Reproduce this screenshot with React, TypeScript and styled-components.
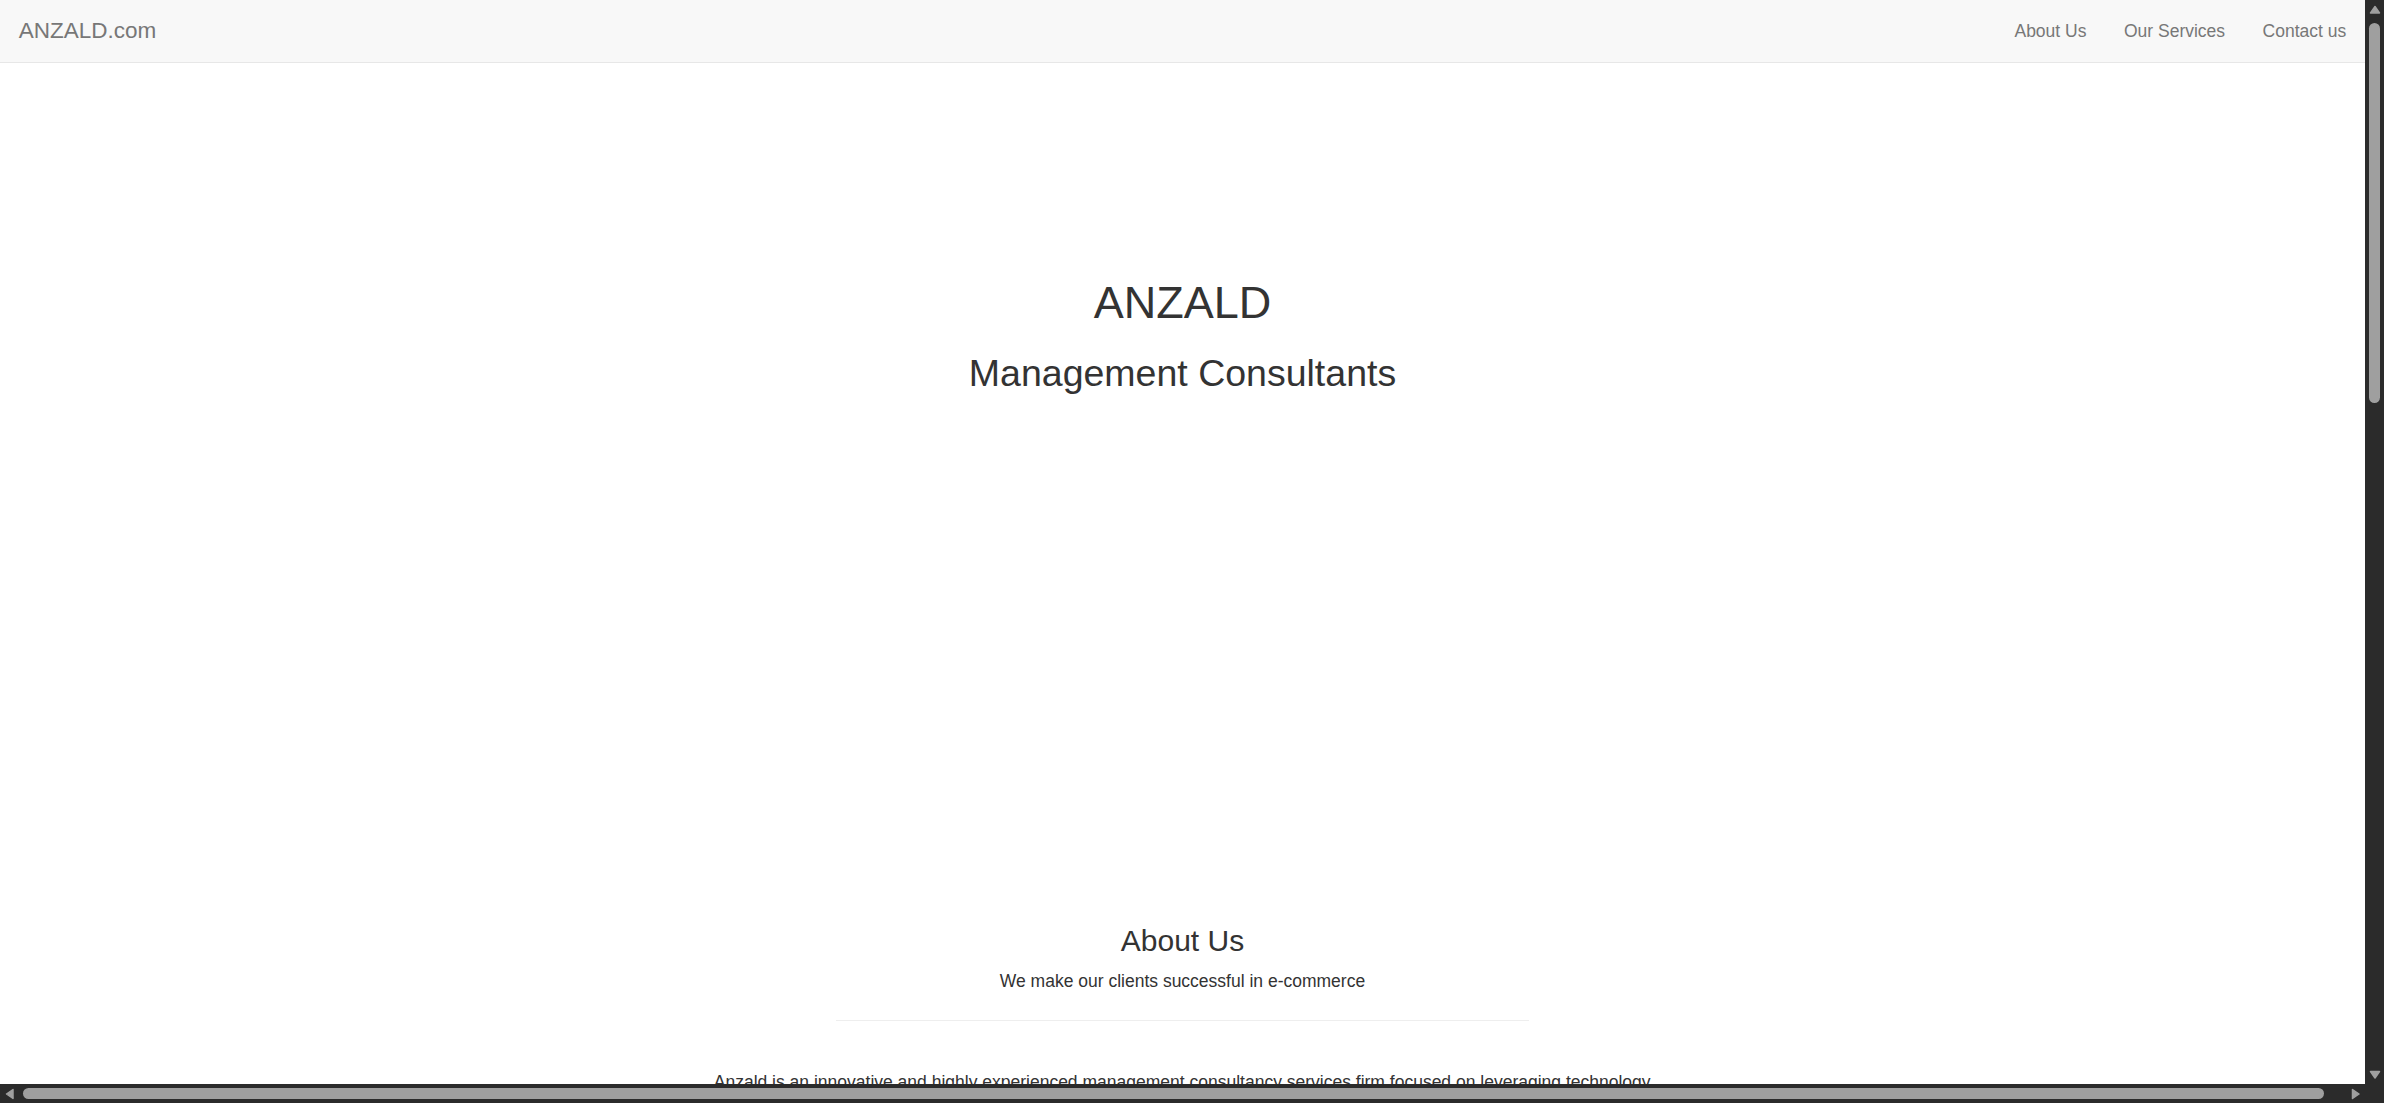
import React from "react";
import styled, { createGlobalStyle } from "styled-components";

const GlobalStyle = createGlobalStyle`
  html, body {
    margin: 0;
    padding: 0;
    height: 100%;
    overflow: hidden;
  }
  body {
    font-family: "Liberation Sans", Arial, Helvetica, sans-serif;
    color: #333;
    background: #fff;
  }
  #root {
    height: 100%;
  }
  * {
    box-sizing: border-box;
  }
`;

const TRACK = "#2b2b2b";
const THUMB = "#9f9f9f";
const BAR = 19;

/* ---------- window frame with scrollbars ---------- */

const Frame = styled.div`
  display: grid;
  grid-template-columns: 1fr ${BAR}px;
  grid-template-rows: 1fr ${BAR}px;
  width: 100vw;
  height: 100vh;
  background: ${TRACK};
`;

const Content = styled.main`
  overflow: hidden;
  background: #fff;
  min-width: 0;
  min-height: 0;
`;

const ScrollBar = styled.div<{ $dir: "v" | "h" }>`
  display: flex;
  flex-direction: ${(p) => (p.$dir === "v" ? "column" : "row")};
  background: ${TRACK};
`;

const ScrollButton = styled.div`
  flex: 0 0 ${BAR}px;
  width: ${BAR}px;
  height: ${BAR}px;
  display: flex;
  align-items: center;
  justify-content: center;
`;

const Track = styled.div<{ $dir: "v" | "h" }>`
  flex: 1;
  display: flex;
  flex-direction: ${(p) => (p.$dir === "v" ? "column" : "row")};
  padding: 4px;
`;

const Thumb = styled.div<{ $dir: "v" | "h"; $length: number }>`
  flex: 0 0 ${(p) => p.$length}px;
  background: ${THUMB};
  border-radius: 6px;
  ${(p) => (p.$dir === "v" ? "width: 11px;" : "height: 11px;")}
`;

const Corner = styled.div`
  background: ${TRACK};
`;

const Arrow = ({ dir }: { dir: "up" | "down" | "left" | "right" }) => {
  const pts = {
    up: "6,1.5 10.5,8 1.5,8",
    down: "1.5,1.5 10.5,1.5 6,8",
    left: "8,1.5 8,10.5 1.5,6",
    right: "1.5,1.5 8,6 1.5,10.5",
  }[dir];
  const vertical = dir === "up" || dir === "down";
  const w = vertical ? 12 : 9.5;
  const h = vertical ? 9.5 : 12;
  return (
    <svg width={w} height={h} viewBox={`0 0 ${w} ${h}`}>
      <polygon points={pts} fill={THUMB} stroke={THUMB} strokeWidth={1.5} strokeLinejoin="round" />
    </svg>
  );
};

/* ---------- page ---------- */

const Page = styled.div`
  min-height: 2922px;
`;

const Navbar = styled.nav`
  display: flex;
  justify-content: space-between;
  align-items: stretch;
  height: 63px;
  background: #f8f8f8;
  border-bottom: 1px solid #e7e7e7;
`;

const Brand = styled.a`
  display: block;
  padding: 0 18.75px;
  font-size: 22.5px;
  line-height: 62px;
  color: #777;
  text-decoration: none;
`;

const NavList = styled.ul`
  display: flex;
  margin: 0;
  padding: 0;
  list-style: none;
`;

const NavItem = styled.li`
  display: block;
`;

const NavLink = styled.a`
  display: block;
  padding: 0 18.75px;
  font-size: 17.5px;
  line-height: 62px;
  color: #777;
  text-decoration: none;
`;

const Hero = styled.header`
  padding: 215px 0 480px;
  text-align: center;
`;

const Title = styled.h1`
  margin: 0;
  font-size: 45px;
  line-height: 1.1;
  font-weight: 400;
  color: #333;
`;

const Tagline = styled.h2`
  margin: 25px 0 0;
  font-size: 37.5px;
  line-height: 1.1;
  font-weight: 400;
  color: #333;
`;

const Section = styled.section`
  padding-top: 50px;
  text-align: center;
`;

const SectionTitle = styled.h3`
  margin: 0 0 12.5px;
  font-size: 30px;
  line-height: 1.1;
  font-weight: 400;
  color: #333;
`;

const SectionLead = styled.p`
  margin: 0;
  font-size: 17.5px;
  line-height: 25px;
  color: #333;
`;

const Divider = styled.hr`
  width: 693.75px;
  margin: 26px auto 0;
  border: 0;
  border-top: 1.25px solid #eee;
`;

const BodyText = styled.p`
  width: 937.5px;
  margin: 48.5px auto 0;
  font-size: 17.5px;
  line-height: 25px;
  color: #333;
  text-align: left;
  white-space: nowrap;
`;

const links = ["About Us", "Our Services", "Contact us"];

export default function App() {
  return (
    <>
      <GlobalStyle />
      <Frame>
        <Content>
          <Page>
            <Navbar>
              <Brand href="#">ANZALD.com</Brand>
              <NavList>
                {links.map((l) => (
                  <NavItem key={l}>
                    <NavLink href="#">{l}</NavLink>
                  </NavItem>
                ))}
              </NavList>
            </Navbar>
            <Hero>
              <Title>ANZALD</Title>
              <Tagline>Management Consultants</Tagline>
            </Hero>
            <Section>
              <SectionTitle>About Us</SectionTitle>
              <SectionLead>We make our clients successful in e-commerce</SectionLead>
              <Divider />
              <BodyText>
                Anzald is an innovative and highly experienced management consultancy services firm focused on leveraging technology
              </BodyText>
            </Section>
          </Page>
        </Content>
        <ScrollBar $dir="v">
          <ScrollButton>
            <Arrow dir="up" />
          </ScrollButton>
          <Track $dir="v">
            <Thumb $dir="v" $length={380} />
          </Track>
          <ScrollButton>
            <Arrow dir="down" />
          </ScrollButton>
        </ScrollBar>
        <ScrollBar $dir="h">
          <ScrollButton>
            <Arrow dir="left" />
          </ScrollButton>
          <Track $dir="h">
            <Thumb $dir="h" $length={2301} />
          </Track>
          <ScrollButton>
            <Arrow dir="right" />
          </ScrollButton>
        </ScrollBar>
        <Corner />
      </Frame>
    </>
  );
}
